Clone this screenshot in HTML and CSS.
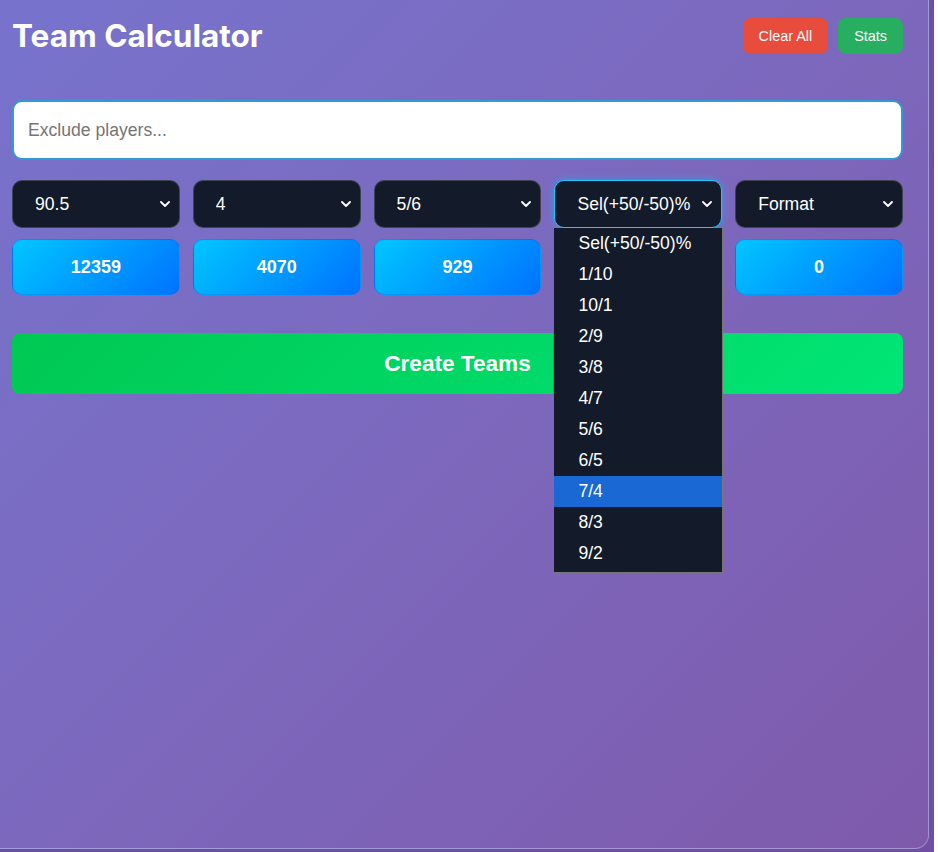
FILE: index.html
```html
<!DOCTYPE html>
<html lang="en">
<head>
<meta charset="UTF-8">
<meta name="viewport" content="width=device-width, initial-scale=1.0">
<title>Team Calculator</title>
<link rel="stylesheet" href="styles.css">
</head>
<body>
<div class="container">
  <div class="header">
    <h1>Team Calculator</h1>
    <div class="header-actions">
      <button class="btn btn-clear">Clear All</button>
      <button class="btn btn-stats">Stats</button>
    </div>
  </div>

  <input type="text" class="exclude" placeholder="Exclude players...">

  <div class="options-grid">
    <div class="field">
      <select><option>90.5</option></select>
    </div>
    <div class="field">
      <select><option>4</option></select>
    </div>
    <div class="field">
      <select><option>5/6</option></select>
    </div>
    <div class="field">
      <select class="focused"><option>Sel(+50/-50)%</option></select>
      <ul class="dropdown">
        <li>Sel(+50/-50)%</li>
        <li>1/10</li>
        <li>10/1</li>
        <li>2/9</li>
        <li>3/8</li>
        <li>4/7</li>
        <li>5/6</li>
        <li>6/5</li>
        <li class="active">7/4</li>
        <li>8/3</li>
        <li>9/2</li>
      </ul>
    </div>
    <div class="field">
      <select><option>Format</option></select>
    </div>

    <div class="count">12359</div>
    <div class="count">4070</div>
    <div class="count">929</div>
    <div class="count">0</div>
    <div class="count">0</div>
  </div>

  <button class="create-btn">Create Teams</button>
</div>
</body>
</html>
```

FILE: styles.css
```css
html {
  background: #fff;
}
body {
  margin: 0;
  width: 934px;
  min-height: 852px;
  background: #6f4fa3;
  font-family: "Liberation Sans", Arial, sans-serif;
}
.container {
  box-sizing: border-box;
  width: 929px;
  height: 849px;
  padding: 16px 25px 0 12px;
  background: linear-gradient(135deg, #7773cd 0%, #7c68bd 50%, #7f5aab 100%);
  border-right: 1px solid rgba(255, 255, 255, 0.3);
  border-bottom: 1px solid rgba(255, 255, 255, 0.3);
  border-bottom-right-radius: 14px;
}
.header {
  display: flex;
  align-items: center;
  justify-content: space-between;
}
.header h1 {
  margin: 0;
  font-family: Inter, "Liberation Sans", sans-serif;
  font-size: 31.5px;
  font-weight: 700;
  color: #fff;
}
.header-actions {
  display: flex;
  gap: 10px;
}
.btn {
  border: none;
  border-radius: 8px;
  color: #fff;
  font-family: "Liberation Sans", Arial, sans-serif;
  font-size: 14.4px;
  height: 36px;
  padding: 0 16px;
  cursor: pointer;
}
.btn-clear {
  background-color: #e74c3c;
}
.btn-stats {
  background-color: #27ae60;
}
.exclude {
  display: block;
  box-sizing: border-box;
  width: 100%;
  height: 60px;
  margin-top: 45px;
  padding: 0 14px;
  border: 2px solid #3498db;
  border-radius: 10px;
  background: #fff;
  font-family: "Liberation Sans", Arial, sans-serif;
  font-size: 17.6px;
  outline: none;
}
.exclude::placeholder {
  color: #757575;
}
.options-grid {
  display: grid;
  grid-template-columns: repeat(5, 1fr);
  gap: 11px 13px;
  margin-top: 20px;
}
.field {
  position: relative;
}
.field select {
  -webkit-appearance: none;
  appearance: none;
  box-sizing: border-box;
  width: 100%;
  height: 48px;
  padding: 0 30px 0 22px;
  border: 1px solid rgba(255, 255, 255, 0.18);
  border-radius: 10px;
  background-color: #131a2a;
  background-image: url("data:image/svg+xml,%3Csvg xmlns='http://www.w3.org/2000/svg' width='10' height='6' viewBox='0 0 10 6'%3E%3Cpath d='M1 1l4 4 4-4' fill='none' stroke='%23fff' stroke-width='1.8' stroke-linecap='round' stroke-linejoin='round'/%3E%3C/svg%3E");
  background-repeat: no-repeat;
  background-position: right 9px center;
  color: #fff;
  font-family: "Liberation Sans", Arial, sans-serif;
  font-size: 17.6px;
  outline: none;
}
.field select.focused {
  border-color: #1ec8ff;
  box-shadow: 0 0 10px rgba(0, 198, 255, 0.45);
}
.dropdown {
  position: absolute;
  top: 48px;
  left: -1px;
  right: -1px;
  z-index: 10;
  margin: 0;
  padding: 0 0 3px;
  list-style: none;
  background: #131a2a;
  border: 1px solid #767676;
  border-top: none;
}
.dropdown li {
  height: 31px;
  line-height: 31px;
  padding-left: 24px;
  color: #fff;
  font-size: 17.6px;
}
.dropdown li.active {
  background: #1a68d4;
}
.count {
  height: 56px;
  box-sizing: border-box;
  display: flex;
  align-items: center;
  justify-content: center;
  border: 1px solid rgba(0, 110, 240, 0.45);
  border-radius: 10px;
  background: linear-gradient(135deg, #00c6ff 0%, #0072ff 100%);
  color: #fff;
  font-size: 18px;
  font-weight: bold;
}
.create-btn {
  display: block;
  width: 100%;
  height: 61px;
  margin-top: 38px;
  border: none;
  border-radius: 8px;
  background: linear-gradient(135deg, #00c853 0%, #00e676 100%);
  color: #fff;
  font-family: "Liberation Sans", Arial, sans-serif;
  font-size: 22.6px;
  font-weight: bold;
  cursor: pointer;
}
```
